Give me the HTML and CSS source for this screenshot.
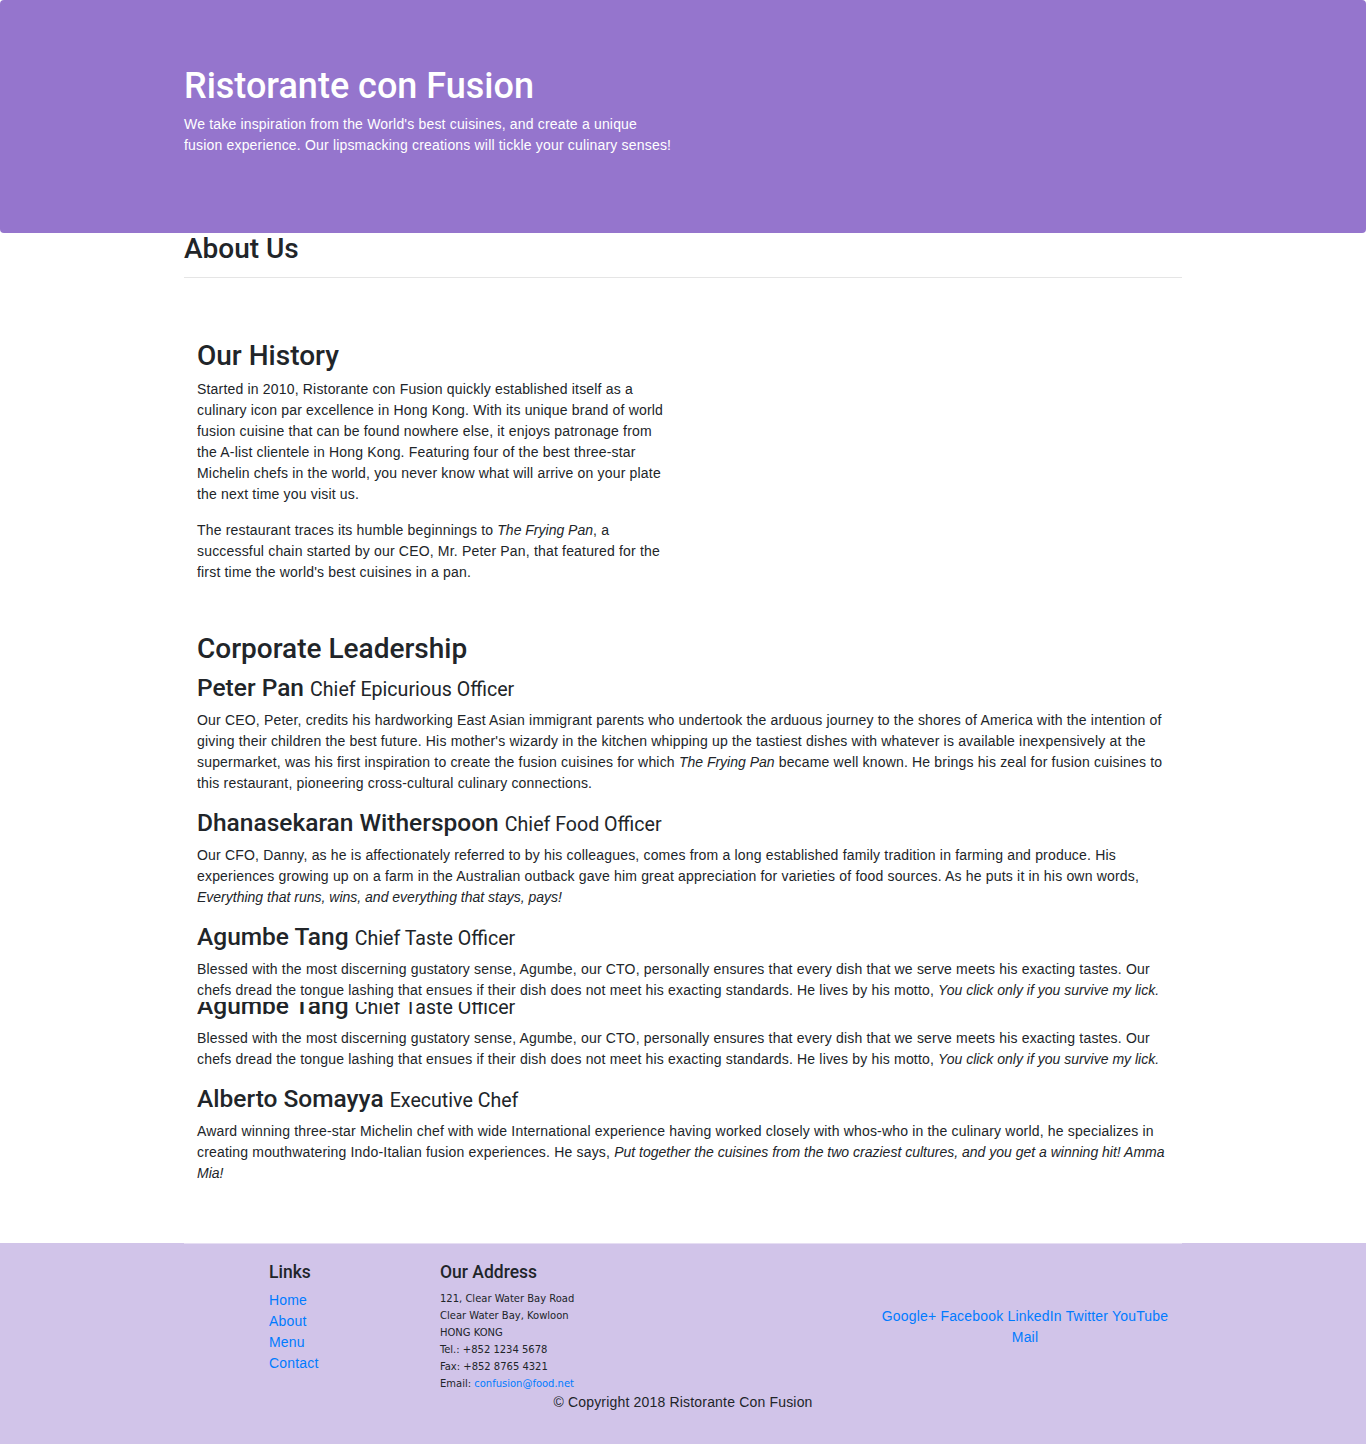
FILE: index.html
```html
<!DOCTYPE html>
<html lang="en">
<head>
<meta charset="utf-8">
<title>Ristorante con Fusion: About Us</title>
<link rel="stylesheet" href="styles.css">
</head>
<body>
<header class="jumbotron">
  <div class="container">
    <h1 class="brand">Ristorante con Fusion</h1>
    <p class="lead">We take inspiration from the World's best cuisines, and create a unique fusion experience. Our lipsmacking creations will tickle your culinary senses!</p>
  </div>
</header>

<main class="container page">
  <h2 class="page-title">About Us</h2>
  <hr class="rule">

  <section class="history">
    <div class="col-half">
      <h2 class="section-title">Our History</h2>
      <p>Started in 2010, Ristorante con Fusion quickly established itself as a culinary icon par excellence in Hong Kong. With its unique brand of world fusion cuisine that can be found nowhere else, it enjoys patronage from the A-list clientele in Hong Kong. Featuring four of the best three-star Michelin chefs in the world, you never know what will arrive on your plate the next time you visit us.</p>
      <p>The restaurant traces its humble beginnings to <em>The Frying Pan</em>, a successful chain started by our CEO, Mr. Peter Pan, that featured for the first time the world's best cuisines in a pan.</p>
    </div>
  </section>

  <section class="leadership">
    <h2 class="section-title title-lead">Corporate Leadership</h2>

    <div class="media">
      <h3 class="leader">Peter Pan <small>Chief Epicurious Officer</small></h3>
      <p>Our CEO, Peter, credits his hardworking East Asian immigrant parents who undertook the arduous journey to the shores of America with the intention of giving their children the best future. His mother's wizardy in the kitchen whipping up the tastiest dishes with whatever is available inexpensively at the supermarket, was his first inspiration to create the fusion cuisines for which <em>The Frying Pan</em> became well known. He brings his zeal for fusion cuisines to this restaurant, pioneering cross-cultural culinary connections.</p>
    </div>

    <div class="media">
      <h3 class="leader">Dhanasekaran Witherspoon <small>Chief Food Officer</small></h3>
      <p>Our CFO, Danny, as he is affectionately referred to by his colleagues, comes from a long established family tradition in farming and produce. His experiences growing up on a farm in the Australian outback gave him great appreciation for varieties of food sources. As he puts it in his own words, <em>Everything that runs, wins, and everything that stays, pays!</em></p>
    </div>

    <div class="media">
      <h3 class="leader">Agumbe Tang <small>Chief Taste Officer</small></h3>
      <p>Blessed with the most discerning gustatory sense, Agumbe, our CTO, personally ensures that every dish that we serve meets his exacting tastes. Our chefs dread the tongue lashing that ensues if their dish does not meet his exacting standards. He lives by his motto, <em>You click only if you survive my lick.</em></p>
    </div>

    <div class="stitch">
      <div class="media media-repeat">
        <h3 class="leader">Agumbe Tang <small>Chief Taste Officer</small></h3>
        <p>Blessed with the most discerning gustatory sense, Agumbe, our CTO, personally ensures that every dish that we serve meets his exacting tastes. Our chefs dread the tongue lashing that ensues if their dish does not meet his exacting standards. He lives by his motto, <em>You click only if you survive my lick.</em></p>
      </div>
    </div>

    <div class="media">
      <h3 class="leader">Alberto Somayya <small>Executive Chef</small></h3>
      <p>Award winning three-star Michelin chef with wide International experience having worked closely with whos-who in the culinary world, he specializes in creating mouthwatering Indo-Italian fusion experiences. He says, <em>Put together the cuisines from the two craziest cultures, and you get a winning hit! Amma Mia!</em></p>
    </div>
  </section>
</main>

<footer class="footer">
  <div class="container footer-inner">
    <div class="footer-row">
      <div class="f-links">
        <h5 class="f-title">Links</h5>
        <ul class="link-list">
          <li><a href="#">Home</a></li>
          <li><a href="#">About</a></li>
          <li><a href="#">Menu</a></li>
          <li><a href="#">Contact</a></li>
        </ul>
      </div>
      <div class="f-address">
        <h5 class="f-title">Our Address</h5>
        <address class="addr">
          121, Clear Water Bay Road<br>
          Clear Water Bay, Kowloon<br>
          HONG KONG<br>
          Tel.: +852 1234 5678<br>
          Fax: +852 8765 4321<br>
          Email: <a href="#">confusion@food.net</a>
        </address>
      </div>
      <div class="f-social">
        <a href="#">Google+</a> <a href="#">Facebook</a> <a href="#">LinkedIn</a> <a href="#">Twitter</a> <a href="#">YouTube</a> <a href="#">Mail</a>
      </div>
    </div>
    <p class="copyright">© Copyright 2018 Ristorante Con Fusion</p>
  </div>
</footer>
</body>
</html>
```

FILE: styles.css
```css
html, body {
  margin: 0;
  padding: 0;
}

body {
  font-family: "Liberation Sans", Arial, sans-serif;
  font-size: 14px;
  line-height: 21px;
  color: #212529;
  background: #ffffff;
  letter-spacing: 0.18px;
}

em {
  letter-spacing: 0;
}

a {
  color: #007bff;
  text-decoration: none;
}

h1, h2, h3, h5 {
  font-family: Roboto, "Liberation Sans", sans-serif;
  font-weight: 500;
  letter-spacing: 0;
}

.container {
  width: 998px;
  margin: 0 auto;
}

/* ---------- header ---------- */
.jumbotron {
  box-sizing: border-box;
  height: 233px;
  padding-top: 65px;
  background: #9575cd;
  border-radius: 4px;
  color: #ffffff;
}

.brand {
  margin: 0 0 6px;
  font-size: 36px;
  line-height: 43px;
}

.lead {
  margin: 0;
  width: 492px;
}

/* ---------- main ---------- */
.page {
  display: flow-root;
}

.page-title {
  margin: 0;
  font-size: 28px;
  line-height: 32px;
}

.rule {
  margin: 12px 0 0;
  border: 0;
  border-top: 1px solid rgba(0, 0, 0, 0.1);
  height: 0;
}

.history {
  margin-top: 62px;
  padding: 0 13px;
}

.col-half {
  width: 472px;
}

.section-title {
  margin: 0 0 7px;
  font-size: 28px;
  line-height: 32px;
}

.history p {
  margin: 0 0 15px;
}

.history p:last-child {
  margin-bottom: 0;
}

.leadership {
  margin-top: 50px;
  padding: 0 13px;
}

.title-lead {
  margin-bottom: 8px;
}

.media {
  margin-bottom: 14px;
}

.leader {
  margin: 0 0 6px;
  font-size: 24.5px;
  line-height: 29px;
}

.leader small {
  font-size: 80%;
  font-weight: 400;
}

.media p {
  margin: 0;
}

.stitch {
  margin-top: -13px;
  overflow: hidden;
}

.media-repeat {
  margin-top: -11px;
}

/* ---------- footer ---------- */
.footer {
  box-sizing: border-box;
  height: 201px;
  margin-top: 45px;
  background: #d1c4e9;
}

.footer-inner {
  border-top: 1px solid rgba(255, 255, 255, 0.45);
  padding-top: 18px;
}

.footer-row {
  display: flex;
  align-items: stretch;
}

.f-links {
  margin-left: 85px;
  width: 171px;
}

.f-address {
  width: 435px;
}

.f-social {
  width: 300px;
  align-self: center;
  text-align: center;
}

.f-title {
  margin: 0 0 7px;
  font-size: 17.5px;
  line-height: 21px;
}

.link-list {
  list-style: none;
  margin: 0;
  padding: 0;
}

.addr {
  font-style: normal;
  font-family: "DejaVu Sans Condensed", "Liberation Sans", sans-serif;
  font-size: 11.1px;
  line-height: 17px;
  letter-spacing: 0;
}

.copyright {
  margin: 0;
  text-align: center;
}
```
